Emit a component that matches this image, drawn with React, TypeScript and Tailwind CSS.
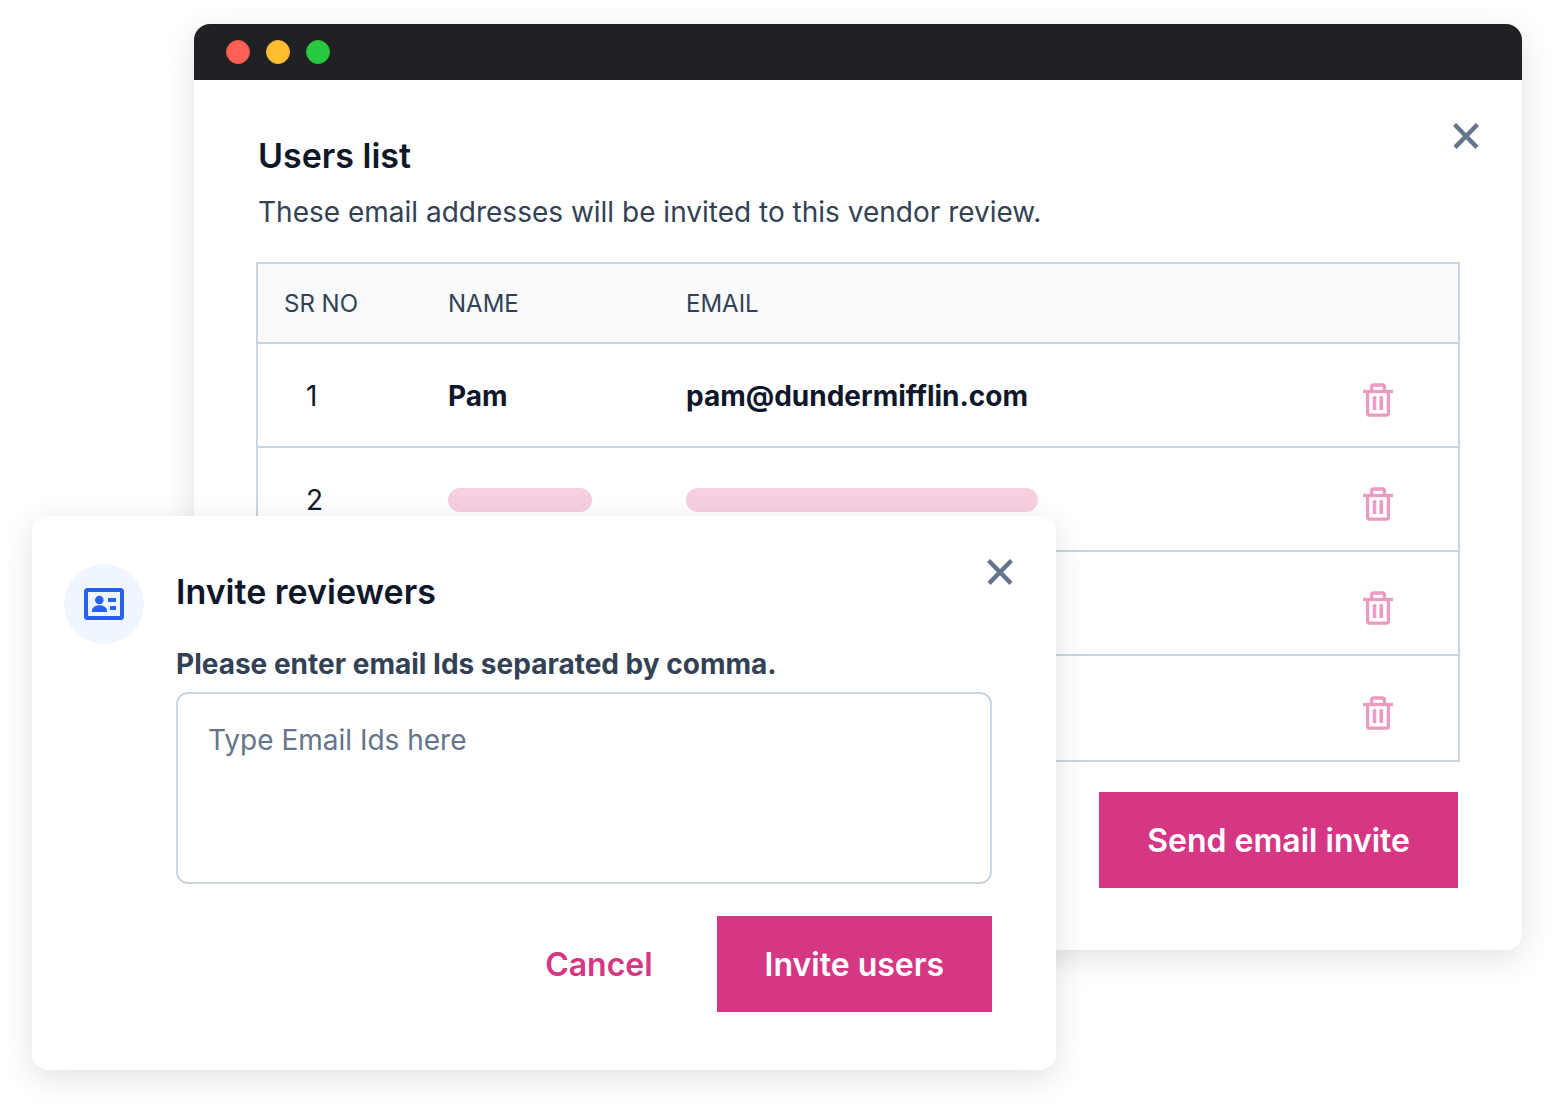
import React from "react";

function CloseIcon() {
  return (
    <svg viewBox="0 0 26 26" className="size-[26px]" fill="none" stroke="currentColor" strokeWidth="4.4" aria-hidden="true">
      <path d="M1.500 1.500 24 24.400M24.500 1.500 2 24.400" />
    </svg>
  );
}

function TrashIcon() {
  return (
    <svg viewBox="0 0 32 34" className="block h-[34px] w-8" fill="none" aria-hidden="true">
      <g stroke="currentColor" strokeWidth="3.3">
        <path d="M1 8.500h30" />
        <path d="M9.600 8.500V4q0-2 2-2h8.800q2 0 2 2v4.500" />
        <path d="M5.600 10v20.200q0 2 2 2h16.800q2 0 2-2V10" />
      </g>
      <path fill="currentColor" d="M10.700 13.300h3.600v13.700h-3.600zM17.500 13.300h3.600v13.700h-3.600z" />
    </svg>
  );
}

function IdCardIcon() {
  return (
    <svg viewBox="0 0 40 32" className="h-8 w-10" fill="currentColor" aria-hidden="true">
      <rect x="2" y="2" width="36" height="28" rx="1.600" fill="none" stroke="currentColor" strokeWidth="4" />
      <circle cx="15.300" cy="12" r="4.300" />
      <path d="M8 24v-1.500c0-3 3.600-5.200 7.500-5.200s7.500 2.200 7.500 5.200V24z" />
      <path d="M24 10h8v4h-8zM26 18h6v4h-6z" />
    </svg>
  );
}

function WindowBar() {
  return (
    <div className="flex h-14 items-center gap-4 bg-[#202124] px-8">
      <span className="size-6 rounded-full border border-[#f2574d] bg-[#ff5f57]" />
      <span className="size-6 rounded-full border border-[#f0b43a] bg-[#ffbe2e]" />
      <span className="size-6 rounded-full border border-[#2abc3c] bg-[#28c840]" />
    </div>
  );
}

type User = { no?: number; name?: string; email?: string };

const users: User[] = [{ no: 1, name: "Pam", email: "pam@dundermifflin.com" }, { no: 2 }, {}, {}];

function UsersTable() {
  return (
    <table className="w-full table-fixed border-separate border-spacing-0 border-2 border-[#cbd5e1] text-left">
      <colgroup>
        <col className="w-[190px]" />
        <col className="w-[238px]" />
        <col />
        <col className="w-24" />
      </colgroup>
      <thead>
        <tr className="h-20 bg-[#f8fafc] text-2xl text-[#334155] [&>th]:border-b-2 [&>th]:border-[#cbd5e1] [&>th]:pt-0.5 [&>th]:font-normal">
          <th className="pl-[26px]">SR NO</th>
          <th>NAME</th>
          <th>EMAIL</th>
          <th aria-label="Actions" />
        </tr>
      </thead>
      <tbody className="text-[28px] leading-10 text-[#0f172a] [&_td]:border-[#cbd5e1] [&>tr:not(:last-child)>td]:border-b-2">
        {users.map((user, i) => (
          <tr key={i} className="h-[104px]">
            <td className="pt-0.5 pl-12">{user.no}</td>
            <td className="pt-0.5 font-bold">
              {user.name ?? <span className="block h-6 w-36 rounded-full bg-[#f6cfe1]" />}
            </td>
            <td className="pt-0.5 font-bold">
              {user.email ?? <span className="block h-6 w-[352px] rounded-full bg-[#f6cfe1]" />}
            </td>
            <td className="pt-2.5">
              <button type="button" aria-label={`Remove user ${i + 1}`} className="block text-[#eb9bc2]">
                <TrashIcon />
              </button>
            </td>
          </tr>
        ))}
      </tbody>
    </table>
  );
}

function UsersWindow() {
  return (
    <section className="overflow-hidden rounded-2xl bg-white shadow-[0_8px_32px_rgba(0,0,0,0.12)]">
      <WindowBar />
      <div className="px-[62px] pt-10 pb-[62px]">
        <header className="mb-[30px] flex items-start justify-between pl-0.5">
          <div className="pt-3">
            <h1 className="text-[34px] leading-12 font-semibold text-[#0f172a]">Users list</h1>
            <p className="mt-3 text-[28px] leading-10 text-[#334155]">
              These email addresses will be invited to this vendor review.
            </p>
          </div>
          <button type="button" aria-label="Close users list" className="-mr-[19px] mt-[3px] text-[#64748b]">
            <CloseIcon />
          </button>
        </header>
        <UsersTable />
        <div className="mt-[30px] flex justify-end pr-0.5">
          <button type="button" className="h-24 bg-[#d63784] px-12 pt-0.5 text-[32px] font-semibold text-white">
            Send email invite
          </button>
        </div>
      </div>
    </section>
  );
}

function InviteDialog() {
  return (
    <section
      role="dialog"
      aria-labelledby="invite-title"
      className="absolute top-[516px] left-8 flex w-[1024px] max-w-full gap-8 rounded-2xl bg-white px-8 pt-12 pb-[58px] shadow-[0_8px_32px_rgba(0,0,0,0.12)]"
    >
      <div className="flex size-20 shrink-0 items-center justify-center rounded-full bg-[#eff6ff] text-[#2563eb]">
        <IdCardIcon />
      </div>
      <form className="flex-1 pr-8" onSubmit={(e) => e.preventDefault()}>
        <div className="flex items-start justify-between">
          <h2 id="invite-title" className="pt-1 text-[34px] leading-12 font-semibold text-[#0f172a]">
            Invite reviewers
          </h2>
          <button type="button" aria-label="Close dialog" className="-mt-[5px] -mr-[21px] text-[#64748b]">
            <CloseIcon />
          </button>
        </div>
        <label htmlFor="emails" className="mt-7 block text-[28px] leading-10 font-bold text-[#334155]">
          Please enter email Ids separated by comma.
        </label>
        <textarea
          id="emails"
          placeholder="Type Email Ids here"
          className="mt-2 block h-48 w-full resize-none rounded-xl border-2 border-[#cbd5e1] px-[30px] py-[26px] text-[28px] leading-10 text-[#0f172a] outline-none placeholder:text-[#64748b]"
        />
        <div className="mt-8 flex justify-end gap-4">
          <button type="button" className="h-24 px-12 pt-0.5 text-[32px] font-semibold text-[#d63784]">
            Cancel
          </button>
          <button type="submit" className="h-24 bg-[#d63784] px-12 pt-0.5 text-[32px] font-semibold text-white">
            Invite users
          </button>
        </div>
      </form>
    </section>
  );
}

export default function App() {
  return (
    <main className="relative min-h-screen bg-white pt-6 pr-8 pb-40 pl-[194px] font-[Inter,sans-serif]">
      <UsersWindow />
      <InviteDialog />
    </main>
  );
}
